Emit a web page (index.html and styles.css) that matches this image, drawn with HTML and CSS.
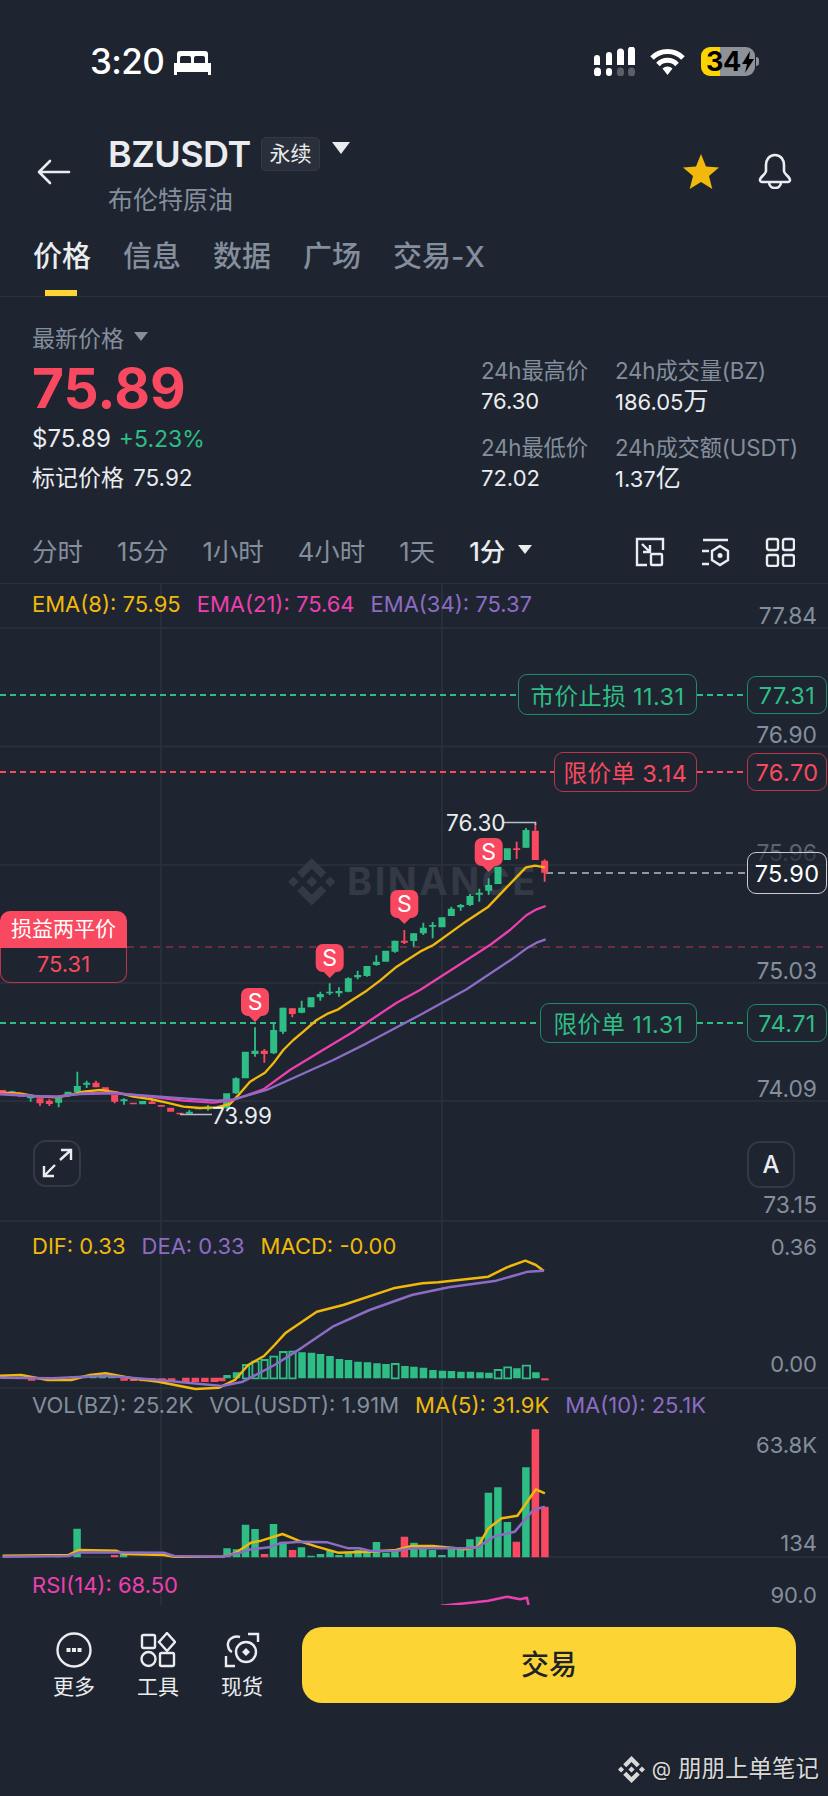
FILE: index.html
```html
<!DOCTYPE html>
<html lang="zh">
<head>
<meta charset="utf-8">
<title>BZUSDT</title>
<link rel="stylesheet" href="styles.css">
</head>
<body>
<div class="page">
  <div class="status">
    <div class="status-left">
      <span class="clock">3:20</span>
      <svg class="bed" width="37" height="24" viewBox="0 0 37 24"><path fill="#fff" d="M3 12V3a3 3 0 0 1 3-3h25a3 3 0 0 1 3 3v9h-3V7a2 2 0 0 0-2-2h-7a2 2 0 0 0-2 2v5h-3V7a2 2 0 0 0-2-2H8a2 2 0 0 0-2 2v5zM0 12h37v9H0zM0 21h3v3H0zM34 21h3v3h-3z"/></svg>
    </div>
    <div class="status-right">
      <svg width="41" height="29" viewBox="0 0 41 29"><path fill="#fff" d="M0 11a3 3 0 0 1 6 0v7H0zM12 8a3 3 0 0 1 6 0v10h-6zM23 5a3 3 0 0 1 7 0v13h-7zM34 3a3 3 0 0 1 7 0v15h-7zM0 24a3 3 0 0 1 7 0v2a3 3 0 0 1-7 0zM12 24a3 3 0 0 1 6 0v2a3 3 0 0 1-6 0z"/><path fill="#5a5f68" d="M23 24a3 3 0 0 1 7 0v2a3 3 0 0 1-7 0zM34 24a3 3 0 0 1 7 0v2a3 3 0 0 1-7 0z"/></svg>
      <svg class="wifi" width="35" height="27" viewBox="0 0 35 27"><path fill="none" stroke="#fff" stroke-width="5" d="M2 10a22 22 0 0 1 31 0M8 16.500a13 13 0 0 1 19 0"/><path fill="#fff" d="M12.500 20.500a7.500 7.500 0 0 1 10 0L17.500 27z"/></svg>
      <div class="battery"><span class="battery-num">34</span><svg width="12" height="22" viewBox="0 0 12 22"><path d="M8 0 0 13h5l-2 9 9-14H7z"/></svg></div>
    </div>
  </div>

  <header class="head">
    <svg class="back" width="34" height="26" viewBox="0 0 34 26"><path fill="none" stroke="#eaecef" stroke-width="2.600" stroke-linecap="round" stroke-linejoin="round" d="M32 13H2M13 2 2 13l11 11"/></svg>
    <div class="head-title">
      <div class="title-row">
        <span class="symbol">BZUSDT</span>
        <span class="badge">永续</span>
        <span class="caret caret-title"></span>
      </div>
      <div class="subtitle">布伦特原油</div>
    </div>
    <svg class="star" width="36" height="35" viewBox="0 0 36 35"><path fill="#f0b90b" d="M18 0l5 12.500 13 1-10 8.500 3.300 13L18 28l-11.300 7L10 22 0 13.500l13-1z"/></svg>
    <svg class="bell" width="34" height="36" viewBox="0 0 34 36"><path fill="none" stroke="#eaecef" stroke-width="2.600" stroke-linejoin="round" d="M17 2c-6 0-9 5-9 10v6c0 3-6 6-6 9 0 1 1 2 2 2h26c1 0 2-1 2-2 0-3-6-6-6-9v-6c0-5-3-10-9-10zM11 29c0 4 3 6 6 6s6-2 6-6"/></svg>
  </header>

  <nav class="tabs">
    <span class="tab tab-on">价格</span>
    <span class="tab">信息</span>
    <span class="tab">数据</span>
    <span class="tab">广场</span>
    <span class="tab">交易-X</span>
  </nav>

  <section class="stats">
    <div class="stats-main">
      <div class="latest">最新价格<span class="caret caret-gray"></span></div>
      <div class="price">75.89</div>
      <div class="fiat">$75.89<span class="up">+5.23%</span></div>
      <div class="mark">标记价格<span class="mark-val">75.92</span></div>
    </div>
    <div class="stats-grid">
      <div class="k">24h最高价</div><div class="k">24h成交量(BZ)</div>
      <div class="v">76.30</div><div class="v">186.05<span class="unit">万</span></div>
      <div class="k k2">24h最低价</div><div class="k k2">24h成交额(USDT)</div>
      <div class="v">72.02</div><div class="v">1.37<span class="unit">亿</span></div>
    </div>
  </section>

  <div class="intervals">
    <span class="iv">分时</span>
    <span class="iv">15分</span>
    <span class="iv">1小时</span>
    <span class="iv">4小时</span>
    <span class="iv">1天</span>
    <span class="iv iv-on">1分<span class="caret caret-iv"></span></span>
    <div class="iv-tools">
      <svg width="30" height="30" viewBox="0 0 30 30"><path class="ico" d="M12 28H2V2h26v11M7 7l8 8M15 8v7H8"/><rect class="ico" x="16" y="17" width="11" height="11" rx="1"/></svg>
      <svg width="30" height="30" viewBox="0 0 30 30"><path class="ico" d="M3 3h25M2 14h7M2 27h7M20 9l8 5v9l-8 5-8-5v-9z"/><circle cx="20" cy="18.500" r="2.500" fill="#eaecef"/></svg>
      <svg width="30" height="30" viewBox="0 0 30 30"><rect class="ico" x="2" y="2" width="11" height="11" rx="2"/><rect class="ico" x="18" y="2" width="11" height="11" rx="2"/><rect class="ico" x="2" y="18" width="11" height="11" rx="2"/><rect class="ico" x="18" y="18" width="11" height="11" rx="2"/></svg>
    </div>
  </div>

  <main class="chart">
    <svg class="plot" width="828" height="1021" viewBox="0 584 828 1021">
      <path class="grid" d="M161 584V1605M442 584V1605M0 628H828M0 746.500H828M0 865H828M0 983H828M0 1101H828M0 1221H828M0 1388H828M0 1557H828"/>
      <g class="wm">
        <g transform="translate(288 858) scale(.375)"><path d="M38.730 53.200l24.590-24.580 24.600 24.600 14.300-14.310L63.320 0 24.420 38.900zM0 63.310l14.300-14.310 14.310 14.310-14.310 14.300zM38.730 73.410l24.590 24.590 24.600-24.600 14.310 14.290-38.900 38.910-38.910-38.880-.02-.02zM98.010 63.310l14.300-14.300 14.300 14.300-14.300 14.300zM77.830 63.300L63.320 48.780 52.590 59.510l-1.240 1.230-2.540 2.540 14.510 14.500 14.500-14.470z"/></g>
        <text class="wm-text" x="347" y="895">BINANCE</text>
      </g>
      <text class="axis axis-main" x="817" y="624">77.84</text>
      <text class="axis axis-main" x="817" y="743">76.90</text>
      <text class="axis axis-main axis-dim" x="817" y="861">75.96</text>
      <text class="axis axis-main" x="817" y="979">75.03</text>
      <text class="axis axis-main" x="817" y="1097">74.09</text>
      <text class="axis axis-main" x="817" y="1213">73.15</text>
      <text class="axis" x="817" y="1255">0.36</text>
      <text class="axis" x="817" y="1372">0.00</text>
      <text class="axis" x="817" y="1453">63.8K</text>
      <text class="axis" x="817" y="1551">134</text>
      <text class="axis" x="817" y="1603">90.0</text>

      <path class="dash dash-green" d="M0 695H518M697 695H747M0 1023H540M697 1023H747"/>
      <path class="dash dash-red" d="M0 772H554M697 772H747"/>
      <path class="dash dash-be" d="M127 947H828"/>
      <path class="dash dash-now" d="M546 873H747"/>

      <g transform="translate(0 880) scale(.33333)">
        <path class="wick up-c" d="M36 632V642M92 648V665M176 650V682M232 575V640M260 602V624M372 655V674M568 690V703M624 675V692M708 592V642M765 442V530M821 432V522M849 383V462M905 362V400M961 335V362M989 310V345M1017 322V350M1045 292V337M1073 272V298M1101 258V290M1129 226V257M1185 182V218M1241 160V200M1270 128V165M1298 126V175M1354 80V108M1382 72V92M1410 42V78M1438 26V65M1466 -5V45M1578 -156V-97"/>
        <path class="body up-c" d="M36 634V640M92 648V655M176 655V668M204 635V645M232 618V636M260 608V614M372 658V664M428 663V673M568 695V701M596 682V688M624 680V688M652 680V687M680 640V685M708 595V640M736 515V595M765 512V522M821 450V520M849 383V455M905 383V398M933 352V382M961 342V352M989 335V340M1017 333V340M1045 295V335M1073 285V292M1101 258V288M1129 245V255M1157 212V245M1185 182V215M1241 160V183M1270 143V160M1298 135V140M1326 112V142M1354 86V108M1382 75V82M1410 48V75M1438 38V44M1466 15V32M1494 -40V12M1522 -95V-60M1578 -150V-97"/>
        <path class="wick down-c" d="M120 655V678M148 658V678M288 602V622M344 645V670M456 660V672M793 507V548M877 385V412M1213 150V192M1550 -115V-63M1606 -172V-148M1634 -62V5"/>
        <path class="body down-c" d="M8 630V638M64 640V650M120 655V670M148 662V672M288 608V622M316 622V632M344 645V665M400 668V673M456 665V672M484 675V680M512 683V695M540 698V703M793 512V522M877 385V402M1213 182V188M1550 -95V-90M1606 -148V-60M1634 -58V-22"/>
        <path class="ln ln-yellow" d="M0 638L60 640 100 648 170 652 210 645 250 635 300 630 350 637 400 650 450 657 500 668 550 680 600 684 650 682 690 672 720 640 750 605 795 578 820 550 850 510 880 480 910 455 950 420 985 400 1015 388 1060 358 1100 332 1140 302 1190 260 1260 215 1300 195 1390 130 1465 80 1520 22 1578 -38 1605 -43 1635 -38"/>
        <path class="ln ln-pink" d="M0 640L100 648 170 650 250 640 340 638 450 650 550 662 640 668 700 660 790 628 870 570 960 515 1060 455 1190 368 1260 330 1400 240 1470 195 1530 150 1580 105 1610 88 1637 78"/>
        <path class="ln ln-purple" d="M0 643L100 648 170 650 240 642 340 640 450 648 550 655 650 662 700 658 800 630 900 585 1000 540 1100 490 1260 405 1400 328 1535 238 1580 205 1610 188 1637 178"/>
      </g>

      <path class="hair" d="M503 822.500H535.500V825M180 1114.500H212"/>
      <text class="extreme" x="446" y="831">76.30</text>
      <text class="extreme" x="212" y="1124">73.99</text>

      <g transform="translate(255 1022)"><path class="pin" d="M-6 -6H-7a7 7 0 0 1-7-7V-27a7 7 0 0 1 7-7H7a7 7 0 0 1 7 7V-13a7 7 0 0 1-7 7H6L0 0z"/><text class="pin-s" y="-12">S</text></g>
      <g transform="translate(329.700 978)"><path class="pin" d="M-6 -6H-7a7 7 0 0 1-7-7V-27a7 7 0 0 1 7-7H7a7 7 0 0 1 7 7V-13a7 7 0 0 1-7 7H6L0 0z"/><text class="pin-s" y="-12">S</text></g>
      <g transform="translate(404.300 924)"><path class="pin" d="M-6 -6H-7a7 7 0 0 1-7-7V-27a7 7 0 0 1 7-7H7a7 7 0 0 1 7 7V-13a7 7 0 0 1-7 7H6L0 0z"/><text class="pin-s" y="-12">S</text></g>
      <g transform="translate(488.700 872)"><path class="pin" d="M-6 -6H-7a7 7 0 0 1-7-7V-27a7 7 0 0 1 7-7H7a7 7 0 0 1 7 7V-13a7 7 0 0 1-7 7H6L0 0z"/><text class="pin-s" y="-12">S</text></g>

      <g transform="translate(0 1210) scale(.528 .33333)">
        <path class="bar down-c" d="M60 505V512M235 505V512M253 505V513M271 505V514M289 505V515M307 505V516M325 505V516M420 503V514"/>
        <path class="bar up-c" d="M5 495V505M140 498V505M158 497V505M176 497V505M194 496V505M212 497V505M430 495V505M448 487V505M572 427V505M590 428V505M607 432V505M625 438V505M643 447V505M660 450V505M678 455V505M696 457V505M714 460V505M731 462V505M767 468V505M784 470V505M802 473V505M820 480V505M838 482V505M855 483V505M873 485V505M891 485V505M909 487V505M926 488V505M979 475V505M1015 487V505"/>
        <path class="bar down-c" d="M1032 505V511"/>
        <path class="bar down-c" d="M352 503V516M370 503V516M388 503V516M406 503V516"/>
        <path class="hollow up-c" d="M460 465H472V505H460zM478 455H490V505H478zM495 450H507V505H495zM512 440H525V505H512zM530 426H543V505H530zM548 425H560V505H548zM742 462H755V505H742zM937 480H950V505H937zM955 472H968V505H955zM990 467H1004V505H990z"/>
        <path class="ln2 ln-yellow" d="M0 497L40 495 90 510 135 510 170 495 200 490 250 505 300 515 370 537 415 533 445 510 470 465 500 438 520 405 540 370 600 305 650 285 745 235 800 220 830 217 925 200 960 172 995 152 1015 165 1030 183"/>
        <path class="ln2 ln-purple" d="M0 503L100 505 200 497 300 510 420 528 460 515 520 465 570 415 630 350 700 300 780 255 850 232 940 212 1000 185 1030 182"/>

        <path class="bar up-c" d="M110 1032V1042M146 956V1042M234 1032V1042M430 1015V1042M448 1018V1042M465 944V1042M483 957V1042M518 942V1042M536 995V1042M571 1012V1042M589 1037V1042M607 1032V1042M625 1020V1042M642 1035V1042M660 1030V1042M678 1020V1042M695 1020V1042M713 996V1042M731 1028V1042M748 1020V1042M784 998V1042M801 1005V1042M819 1020V1042M837 1035V1042M855 1010V1042M872 1012V1042M890 988V1042M908 980V1042M925 848V1042M943 832V1042M961 936V1042M996 772V1042"/>
        <path class="bar down-c" d="M40 1035V1042M217 1035V1042M501 1032V1042M554 1020V1042M766 980V1042M978 995V1042M1014 658V1042M1032 890V1042"/>
        <path class="ln2 ln-yellow" d="M5 1037L130 1035 150 1020 220 1022 235 1032 310 1035 330 1040 420 1040 445 1030 475 998 495 992 535 972 570 995 600 1010 640 1028 700 1025 750 1020 780 1008 820 1008 880 1018 905 1010 925 955 950 925 980 917 1015 838 1032 850"/>
        <path class="ln2 ln-purple" d="M5 1040L130 1038 150 1027 310 1028 330 1038 420 1040 450 1030 475 1018 510 1012 530 1000 570 995 620 997 660 1015 680 1015 700 1022 750 1023 780 1015 880 1015 905 1012 935 980 975 965 1010 900 1032 890"/>
      </g>
      <g transform="translate(0 1560) scale(.528 .33333)">
        <path class="ln2 ln-pink" d="M835 137L900 127 925 122 960 110 985 118 998 113 1001 135"/>
      </g>
    </svg>

    <section class="pane pane-main">
      <div class="legend">
        <span class="c-yellow">EMA(8): 75.95</span>
        <span class="c-pink">EMA(21): 75.64</span>
        <span class="c-purple">EMA(34): 75.37</span>
      </div>
    </section>
    <section class="pane pane-macd">
      <div class="legend">
        <span class="c-yellow">DIF: 0.33</span>
        <span class="c-purple">DEA: 0.33</span>
        <span class="c-yellow">MACD: -0.00</span>
      </div>
    </section>
    <section class="pane pane-vol">
      <div class="legend">
        <span class="c-gray">VOL(BZ): 25.2K</span>
        <span class="c-gray">VOL(USDT): 1.91M</span>
        <span class="c-yellow">MA(5): 31.9K</span>
        <span class="c-purple">MA(10): 25.1K</span>
      </div>
    </section>
    <section class="pane pane-rsi">
      <div class="legend"><span class="c-pink">RSI(14): 68.50</span></div>
    </section>

    <div class="tag tag-green tag-stop">市价止损 11.31</div>
    <div class="tag tag-green tag-side tag-side-stop">77.31</div>
    <div class="tag tag-red tag-limit-red">限价单 3.14</div>
    <div class="tag tag-red tag-side tag-side-red">76.70</div>
    <div class="tag tag-green tag-limit-green">限价单 11.31</div>
    <div class="tag tag-green tag-side tag-side-green">74.71</div>
    <div class="tag tag-now">75.90</div>
    <div class="be">
      <div class="be-head">损益两平价</div>
      <div class="be-body">75.31</div>
    </div>
    <div class="chart-btn btn-expand"><svg width="47" height="47" viewBox="0 0 47 47"><path fill="none" stroke="#eaecef" stroke-width="2.400" d="M11 36 22 25M11 26v10h10M27 20 38 10M28 10h10v10"/></svg></div>
    <div class="chart-btn btn-auto">A</div>
  </main>

  <footer class="foot">
    <div class="actions">
      <div class="nav">
        <div class="nav-item">
          <svg width="36" height="36" viewBox="0 0 36 36"><circle class="ico" cx="18" cy="18" r="16.500"/><path fill="#eaecef" d="M10.500 16h4v4h-4zM16 16h4v4h-4zM21.500 16h4v4h-4z"/></svg>
          <span>更多</span>
        </div>
        <div class="nav-item">
          <svg width="36" height="36" viewBox="0 0 36 36"><rect class="ico" x="2" y="3" width="13" height="13" rx="1.500"/><path class="ico" d="M27 1l8 9-8 9-8-9z"/><circle class="ico" cx="8.500" cy="27" r="7"/><rect class="ico" x="20" y="21" width="14" height="13" rx="1.500"/></svg>
          <span>工具</span>
        </div>
        <div class="nav-item">
          <svg width="36" height="36" viewBox="0 0 36 36"><path class="ico" d="M24 2h10v8M2 24v10h9"/><path class="ico" d="M16 5C9 3 3 8 4 14c.5 3 2 5 4 6"/><circle class="ico" cx="22" cy="20" r="10"/><path fill="#eaecef" d="M22 16l4 4-4 4-4-4z"/></svg>
          <span>现货</span>
        </div>
      </div>
      <button class="trade" type="button">交易</button>
    </div>
    <div class="credit">
      <svg width="27" height="27" viewBox="0 0 126.610 126.610"><path fill="#d9d9d9" d="M38.730 53.200l24.590-24.580 24.600 24.600 14.300-14.310L63.320 0 24.420 38.900zM0 63.310l14.300-14.310 14.310 14.310-14.310 14.300zM38.730 73.410l24.590 24.590 24.600-24.600 14.310 14.290-38.900 38.910-38.910-38.880-.02-.02zM98.010 63.310l14.300-14.300 14.300 14.300-14.300 14.300zM77.830 63.300L63.320 48.780 52.590 59.510l-1.240 1.230-2.540 2.540 14.510 14.500 14.500-14.470z"/></svg>
      <span class="credit-at">@</span><span>朋朋上单笔记</span>
    </div>
  </footer>
</div>
</body>
</html>
```
FILE: styles.css
```css
* { box-sizing: border-box; }
html, body { margin: 0; padding: 0; }
body {
  background: #1e2530;
  color: #eaecef;
  font-family: Inter, "Noto Sans CJK SC", sans-serif;
}
.page { width: 828px; height: 1796px; overflow: hidden; }

.caret { display: inline-block; width: 0; height: 0; border-style: solid; border-color: transparent; border-bottom-width: 0; }

/* status */
.status { height: 130px; padding: 47px 73px 0 90px; display: flex; justify-content: space-between; align-items: flex-start; }
.status-left { display: flex; align-items: center; gap: 10px; height: 29px; }
.clock { font-size: 35px; line-height: 29px; font-weight: 500; color: #fff; letter-spacing: -.6px; }
.bed { margin-top: 2px; }
.status-right { display: flex; gap: 15px; align-items: center; height: 29px; }
.wifi { margin-right: 1px; }
.battery { position: relative; width: 54px; height: 29px; border-radius: 9px; background: linear-gradient(to right, #fcd500 0 19px, #8e9197 19px); color: #000; display: flex; align-items: center; padding-left: 5px; gap: 1px; }
.battery::after { content: ""; position: absolute; left: 55px; top: 10px; width: 3px; height: 9px; border-radius: 0 3px 3px 0; background: #8e9197; }
.battery-num { font-size: 27px; font-weight: 700; letter-spacing: -.5px; line-height: 29px; }

/* header */
.head { height: 90px; display: flex; align-items: flex-start; padding: 7px 36px 0 37px; }
.back { margin-top: 22px; }
.head-title { margin-left: 37px; flex: 1; }
.title-row { display: flex; align-items: center; height: 34px; }
.symbol { font-size: 36px; font-weight: 600; line-height: 34px; letter-spacing: -.5px; width: 153px; }
.badge { width: 59px; height: 34px; border: 1px solid #333a46; background: #2a303b; border-radius: 5px; font-size: 21px; line-height: 32px; text-align: center; }
.caret-title { margin-left: 12px; border-width: 12px 9px; border-top-color: #eaecef; }
.subtitle { margin-top: 13px; font-size: 25px; line-height: 32px; color: #848e9c; }
.star { margin: 17px 0 0 1px; }
.bell { margin: 16px 0 0 39px; }

/* tabs */
.tabs { height: 77px; display: flex; gap: 32px; padding-left: 33px; border-bottom: 1px solid #2a303b; }
.tab { position: relative; font-size: 29px; line-height: 40px; margin-top: 17px; color: #848e9c; font-weight: 500; height: 59px; }
.tab-on { color: #eaecef; }
.tab-on::after { content: ""; position: absolute; left: 12px; width: 32px; bottom: 0; height: 6px; background: #fcd535; }

/* stats */
.stats { height: 233px; display: flex; padding-left: 32px; }
.stats-main { width: 449px; padding-top: 27px; }
.latest { font-size: 23px; line-height: 30px; color: #848e9c; display: flex; align-items: center; }
.caret-gray { margin: 4px 0 0 10px; border-width: 9px 7px; border-top-color: #848e9c; }
.price { margin-top: 2px; font-size: 55px; line-height: 64px; font-weight: 700; color: #f84960; }
.fiat { margin-top: 4px; font-size: 24px; line-height: 30px; }
.up { margin-left: 8px; color: #2ebd85; font-size: 23px; }
.mark { margin-top: 9px; font-size: 23px; line-height: 30px; }
.mark-val { margin-left: 9px; font-size: 22.500px; }
.stats-grid { padding-top: 59px; display: grid; grid-template-columns: 134px 1fr; grid-auto-rows: min-content; }
.k { font-size: 22.300px; line-height: 30px; color: #848e9c; white-space: nowrap; letter-spacing: -.15px; }
.k2 { margin-top: 16px; }
.v { font-size: 22px; line-height: 30px; }
.unit { font-size: 25px; }

/* intervals */
.intervals { height: 54px; display: flex; gap: 34px; padding: 0 33px 0 32px; align-items: flex-start; border-bottom: 1px solid #2a303b; }
.iv { font-size: 25.500px; line-height: 44px; color: #848e9c; white-space: nowrap; }
.iv-on { color: #eaecef; font-weight: 500; display: flex; align-items: center; }
.caret-iv { margin: 3px 0 0 13px; border-width: 9px 7.500px; border-top-color: #eaecef; }
.iv-tools { margin-left: auto; display: flex; gap: 35px; padding-top: 7px; }
.ico { fill: none; stroke: #eaecef; stroke-width: 2.400; }

/* chart */
.chart { position: relative; height: 1021px; }
.plot { position: absolute; left: 0; top: 0; display: block; }
.pane { position: relative; }
.pane-main { height: 638px; padding-top: 6px; }
.pane-macd { height: 167px; padding-top: 10px; }
.pane-vol { height: 168px; padding-top: 2px; }
.pane-rsi { height: 48px; padding-top: 14px; }
.legend { display: flex; gap: 16px; padding-left: 32px; font-size: 22px; line-height: 28px; white-space: nowrap; }
.c-yellow { color: #f0b90b; }
.c-pink { color: #ec3fb0; }
.c-purple { color: #8c6cc4; }
.c-gray { color: #848e9c; }

.grid { stroke: #2c323e; stroke-width: 1.500; fill: none; }
.axis { font-size: 22px; fill: #848e9c; text-anchor: end; }
.axis-main { font-size: 22.800px; }
.axis-dim { opacity: .6; }
.wm path, .wm-text { fill: #333a46; }
.wm-text { font-size: 38px; font-weight: 700; letter-spacing: 2.500px; }
.dash { fill: none; stroke-width: 2; stroke-dasharray: 6 4; }
.dash-green { stroke: #2ebd85; }
.dash-red { stroke: #f84960; }
.dash-be { stroke: #6b2f40; stroke-dasharray: 7 6; }
.dash-now { stroke: #b7bdc6; stroke-width: 1.500; stroke-dasharray: 7 5; }
.wick, .body, .ln, .ln2, .bar, .hollow, .hair { fill: none; }
.wick { stroke-width: 5.500; }
.body { stroke-width: 21; }
.up-c { stroke: #2ebd85; }
.down-c { stroke: #f84960; }
.ln { stroke-width: 7; stroke-linejoin: round; }
.ln2 { stroke-width: 2.500px; stroke-linejoin: round; vector-effect: non-scaling-stroke; }
.bar { stroke-width: 7.500px; vector-effect: non-scaling-stroke; }
.hollow { stroke-width: 1.800px; vector-effect: non-scaling-stroke; }
.ln-yellow { stroke: #f0b90b; }
.ln-pink { stroke: #ec3fb0; }
.ln-purple { stroke: #8c6cc4; }
.hair { stroke: #b7bdc6; stroke-width: 1.500; }
.extreme { font-size: 22.500px; fill: #eaecef; }
.pin { fill: #f84960; }
.pin-s { fill: #fff; font-size: 23px; text-anchor: middle; }

.tag { position: absolute; display: flex; align-items: center; justify-content: center; border: 1.500px solid; border-radius: 9px; background: #1e2530; font-size: 23.500px; white-space: nowrap; letter-spacing: .4px; }
.tag-green { color: #2ebd85; border-color: #1f8a66; }
.tag-red { color: #f84960; border-color: #b8354a; }
.tag-side { left: 747px; width: 80px; height: 38px; }
.tag-stop { left: 518px; top: 90px; width: 179px; height: 41px; }
.tag-side-stop { top: 92px; }
.tag-limit-red { left: 554px; top: 168px; width: 143px; height: 40px; }
.tag-side-red { top: 169px; }
.tag-limit-green { left: 540px; top: 419px; width: 157px; height: 40px; }
.tag-side-green { top: 420px; }
.tag-now { left: 747px; top: 268px; width: 80px; height: 42px; color: #fff; border-color: #c8ccd2; background: rgba(30,37,48,.6); }
.be { position: absolute; left: 0; top: 327px; width: 127px; height: 72px; font-size: 21px; text-align: center; }
.be-head { height: 37px; line-height: 36px; background: #f84960; color: #fff; border-radius: 10px 10px 0 0; }
.be-body { height: 35px; line-height: 33px; color: #f84960; border: 1.500px solid #b8354a; border-top: 0; border-radius: 0 0 10px 10px; font-size: 22px; }
.chart-btn { position: absolute; width: 48px; height: 47px; border: 2px solid #333a46; border-radius: 13px; }
.chart-btn svg { position: absolute; left: -2px; top: -2px; }
.btn-expand { left: 33px; top: 556px; }
.btn-auto { left: 747px; top: 557px; text-align: center; font-size: 24px; font-weight: 500; line-height: 43px; }

/* footer */
.foot { height: 191px; }
.actions { display: flex; height: 98px; padding: 22px 32px 0 32px; }
.nav { display: flex; width: 270px; padding-top: 5px; }
.nav-item { width: 84px; display: flex; flex-direction: column; align-items: center; gap: 7px; font-size: 21px; line-height: 24px; }
.nav-item svg { display: block; }
.trade { width: 494px; height: 76px; border: 0; border-radius: 20px; background: #fcd535; color: #1e2329; font: 500 28px/76px Inter, "Noto Sans CJK SC", sans-serif; padding: 0; }
.credit { display: flex; justify-content: flex-end; align-items: center; padding-right: 9px; margin-top: 52px; height: 28px; font-size: 23.500px; line-height: 28px; color: #d9d9d9; text-shadow: 1px 1px 1px #14181f; }
.credit-at { margin: 0 7px; font-size: 20px; }
```
